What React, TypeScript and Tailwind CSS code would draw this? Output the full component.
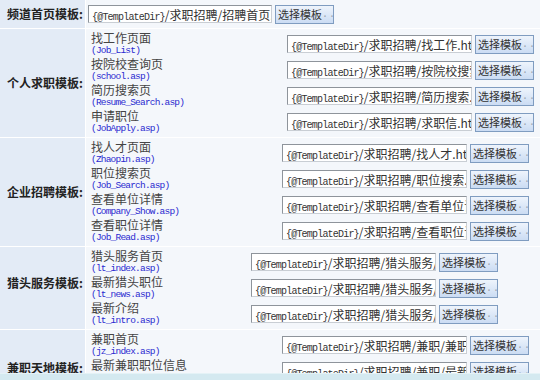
import React from "react";

const CJK = '"Noto Sans CJK SC", "Liberation Sans", sans-serif';
const MONO = '"Liberation Mono", "Noto Sans CJK SC", monospace';

function PathBox({ tail, w = 185 }: { tail: string; w?: number }) {
  return (
    <div
      className="h-[18px] shrink-0 overflow-hidden whitespace-nowrap border border-t-[#8e949b] border-l-[#8e949b] border-r-[#c9ced4] border-b-[#c9ced4] bg-white pl-[3px] leading-[16px] text-[#333]"
      style={{ width: w }}
    >
      <span className="text-[10px] tracking-[-0.8px]" style={{ fontFamily: MONO }}>
        {"{@TemplateDir}"}
      </span>
      <span className="text-[12px]" style={{ fontFamily: CJK }}>
        {tail}
      </span>
    </div>
  );
}

function PickButton() {
  return (
    <div className="flex h-[19px] w-[59px] shrink-0 items-center overflow-hidden whitespace-nowrap border border-[#7f9cc0] bg-gradient-to-b from-[#eef4fc] to-[#cbdcf3] pl-[2px] leading-[17px] text-[#333]">
      <span className="text-[11px]" style={{ fontFamily: CJK }}>
        选择模板
      </span>
      <span className="text-[10px] tracking-[1px] text-[#9aa3ad]" style={{ fontFamily: MONO }}>
        ...
      </span>
    </div>
  );
}

type Item = { name: string; file: string; tail: string };

function Group({
  label,
  items,
  nameW,
  labelOffset = 0,
}: {
  label: string;
  items: Item[];
  nameW: number;
  labelOffset?: number;
}) {
  return (
    <div className="flex gap-px">
      <div className="flex w-[85px] shrink-0 items-center justify-end bg-[#e3ebf6] pr-[2px]">
        <span
          className="text-[12px] font-bold text-[#222]"
          style={{ fontFamily: CJK, marginTop: labelOffset }}
        >
          {label}
        </span>
      </div>
      <div className="flex flex-1 flex-col bg-[#f4f7fb] py-[2px] pl-[5px]">
        {items.map((it) => (
          <div key={it.name} className="flex h-[26px] items-center">
            <div className="flex shrink-0 flex-col" style={{ width: nameW }}>
              <span className="text-[12px] leading-[13px] text-[#444]" style={{ fontFamily: CJK }}>
                {it.name}
              </span>
              <span
                className="text-[9.5px] leading-[13px] tracking-[-0.8px] text-[#2a2ad0]"
                style={{ fontFamily: MONO }}
              >
                ({it.file})
              </span>
            </div>
            <div className="flex items-center gap-[3px]">
              <PathBox tail={it.tail} />
              <PickButton />
            </div>
          </div>
        ))}
      </div>
    </div>
  );
}

export default function App() {
  return (
    <div className="relative h-[380px] w-[540px] overflow-hidden bg-white">
      <div className="flex flex-col gap-px">
        <div className="flex h-[28px] gap-px">
          <div className="flex w-[85px] shrink-0 items-center justify-end bg-[#e3ebf6] pr-[2px]">
            <span className="text-[12px] font-bold text-[#222]" style={{ fontFamily: CJK }}>
              频道首页模板:
            </span>
          </div>
          <div className="flex flex-1 items-center gap-[3px] bg-[#f4f7fb] pl-[2px]">
            <PathBox tail="/求职招聘/招聘首页.htm" w={184} />
            <PickButton />
          </div>
        </div>
        <Group
          label="个人求职模板:"
          nameW={196}
          items={[
            { name: "找工作页面", file: "Job_List", tail: "/求职招聘/找工作.htm" },
            { name: "按院校查询页", file: "school.asp", tail: "/求职招聘/按院校搜索.htm" },
            { name: "简历搜索页", file: "Resume_Search.asp", tail: "/求职招聘/简历搜索.htm" },
            { name: "申请职位", file: "JobApply.asp", tail: "/求职招聘/求职信.htm" },
          ]}
        />
        <Group
          label="企业招聘模板:"
          nameW={191}
          items={[
            { name: "找人才页面", file: "Zhaopin.asp", tail: "/求职招聘/找人才.htm" },
            { name: "职位搜索页", file: "Job_Search.asp", tail: "/求职招聘/职位搜索.htm" },
            { name: "查看单位详情", file: "Company_Show.asp", tail: "/求职招聘/查看单位详情.htm" },
            { name: "查看职位详情", file: "Job_Read.asp", tail: "/求职招聘/查看职位详情.htm" },
          ]}
        />
        <Group
          label="猎头服务模板:"
          nameW={160}
          labelOffset={-10}
          items={[
            { name: "猎头服务首页", file: "lt_index.asp", tail: "/求职招聘/猎头服务/首页.htm" },
            { name: "最新猎头职位", file: "lt_news.asp", tail: "/求职招聘/猎头服务/最新职位.htm" },
            { name: "最新介绍", file: "lt_intro.asp", tail: "/求职招聘/猎头服务/介绍.htm" },
          ]}
        />
        <Group
          label="兼职天地模板:"
          nameW={191}
          labelOffset={-6}
          items={[
            { name: "兼职首页", file: "jz_index.asp", tail: "/求职招聘/兼职/兼职首页.htm" },
            { name: "最新兼职职位信息", file: "jz_newjob.asp", tail: "/求职招聘/兼职/最新兼职.htm" },
            { name: "兼职搜索页", file: "jz_search.asp", tail: "/求职招聘/兼职/兼职搜索.htm" },
          ]}
        />
      </div>
      <div className="absolute bottom-0 left-0 right-0 h-[7px] border-t border-[#e4f2f6] bg-[#d4e9f0]" />
    </div>
  );
}
